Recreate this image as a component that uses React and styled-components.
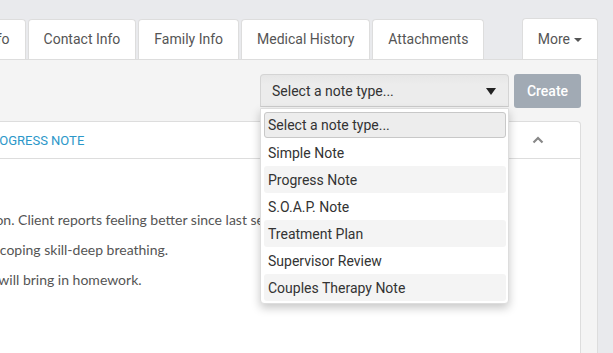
import styled, { createGlobalStyle } from 'styled-components'

const GlobalStyle = createGlobalStyle`
    html, body {
        margin: 0;
        padding: 0;
        background: #e9eaed;
        overflow: hidden;
        font-family: Roboto, "Liberation Sans", sans-serif;
    }
`

// the view is scrolled sideways: the left part of the page is off screen
const Page = styled.div`
    width: 668px;
    margin-left: -70px;
    padding-top: 18px;
    height: 353px;
    display: flex;
    flex-direction: column;
    box-sizing: border-box;
`

const TabBar = styled.ul`
    display: flex;
    align-items: flex-end;
    gap: 2px;
    margin: 0;
    padding: 0;
    list-style: none;
`

const Tab = styled.li`
    padding: ${p => (p.$push ? '10px 15px 10px 15px' : '9px 15px 10px')};
    line-height: 20px;
    font-size: 14px;
    color: #555;
    background: #fff;
    border: 1px solid #ddd;
    border-bottom: none;
    border-radius: 4px 4px 0 0;
    margin-left: ${p => (p.$push ? 'auto' : '0')};
    display: flex;
    align-items: center;
    gap: 4px;
`

const Caret = styled.span`
    width: 0;
    height: 0;
    border-left: 4px solid transparent;
    border-right: 4px solid transparent;
    border-top: 4px solid #555;
    margin-top: 1px;
`

const Panel = styled.div`
    flex: 1;
    background: #f4f4f4;
    border: 1px solid #ddd;
    border-bottom: none;
    padding: 14px 16px 0 16px;
    display: flex;
    flex-direction: column;
`

const Toolbar = styled.div`
    display: flex;
    justify-content: flex-end;
    gap: 5px;
`

const SelectWrap = styled.div`
    position: relative;
    width: 249px;
`

const SelectBox = styled.div`
    height: 33px;
    box-sizing: border-box;
    border: 1px solid #d4d4d4;
    border-bottom-color: #ccc;
    border-radius: 4px 4px 0 0;
    background: linear-gradient(#e6e6e6, #ececec 30%, #ececec);
    padding: 0 12px 0 11px;
    display: flex;
    align-items: center;
    justify-content: space-between;
    font-size: 14px;
    color: #333;
`

const SelectCaret = styled(Caret)`
    border-left-width: 5px;
    border-right-width: 5px;
    border-top: 7px solid #222;
`

const Menu = styled.ul`
    position: absolute;
    top: 34px;
    left: 0;
    right: 0;
    margin: 0;
    padding: 3px 2px 2px 3px;
    list-style: none;
    background: #fff;
    border: 1px solid #ddd;
    border-radius: 0 0 4px 4px;
    box-shadow: 0 4px 10px rgba(0, 0, 0, .22);
    z-index: 10;
`

const Option = styled.li`
    height: 27px;
    box-sizing: border-box;
    padding: 0 4px;
    display: flex;
    align-items: center;
    font-size: 14px;
    color: #333;
    background: ${p => (p.$alt ? '#f4f4f4' : '#fff')};
    border-radius: ${p => (p.$alt ? '3px' : '0')};

    &[aria-selected='true'] {
        height: 26px;
        margin-bottom: 1px;
        border: 1px solid #c8c8c8;
        border-radius: 3px;
        background: #ededed;
        padding: 0 3px;
    }
`

const CreateButton = styled.button`
    width: 67px;
    height: 34px;
    border: none;
    border-radius: 3px;
    background: #a1aab4;
    color: #fff;
    font-family: inherit;
    font-size: 14px;
    font-weight: 500;
    padding: 0;
`

const Card = styled.section`
    flex: 1;
    margin-top: 13px;
    background: #fff;
    border: 1px solid #ddd;
    border-bottom: none;
    border-radius: 4px 4px 0 0;
`

const CardHeader = styled.header`
    height: 36px;
    padding: 0 36px 0 15px;
    border-bottom: 1px solid #ddd;
    display: flex;
    align-items: center;
    justify-content: space-between;
`

const CardTitle = styled.h3`
    margin: 0;
    display: flex;
    align-items: center;
    gap: 6px;
    font-size: 13px;
    font-weight: 400;
    color: #2b97c9;
    text-transform: uppercase;
`

const CardBody = styled.div`
    padding: 51px 15px 0 17px;
    font-family: Lato, "Open Sans", sans-serif;
    font-size: 14px;
    color: #555;
`

const Line = styled.p`
    margin: 0 0 10px;
    line-height: 20px;
    white-space: nowrap;
`

const options = [
    'Select a note type...',
    'Simple Note',
    'Progress Note',
    'S.O.A.P. Note',
    'Treatment Plan',
    'Supervisor Review',
    'Couples Therapy Note',
]

const tabs = ['Client Info', 'Contact Info', 'Family Info', 'Medical History', 'Attachments']

export default function App() {
    return (
        <>
            <GlobalStyle />
            <Page>
                <TabBar>
                    {tabs.map(t => <Tab key={t}>{t}</Tab>)}
                    <Tab $push>More <Caret /></Tab>
                </TabBar>
                <Panel>
                    <Toolbar>
                        <SelectWrap>
                            <SelectBox>
                                <span>Select a note type...</span>
                                <SelectCaret />
                            </SelectBox>
                            <Menu>
                                {options.map((o, i) => (
                                    <Option key={o} aria-selected={i === 0} $alt={i > 0 && i % 2 === 0}>{o}</Option>
                                ))}
                            </Menu>
                        </SelectWrap>
                        <CreateButton>Create</CreateButton>
                    </Toolbar>
                    <Card>
                        <CardHeader>
                            <CardTitle>
                                <svg width="14" height="14" viewBox="0 0 14 14">
                                    <path d="M3 1h6l3 3v9H3z" fill="none" stroke="#2b97c9" strokeWidth="1.3" />
                                </svg>
                                Progress Note
                            </CardTitle>
                            <svg width="12" height="8" viewBox="0 0 12 8">
                                <path d="M1.5 6.5 L6 2 L10.5 6.5" fill="none" stroke="#888" strokeWidth="2.2" />
                            </svg>
                        </CardHeader>
                        <CardBody>
                            <Line>Session. Client reports feeling better since last session.</Line>
                            <Line>Used coping skill-deep breathing.</Line>
                            <Line>They will bring in homework.</Line>
                        </CardBody>
                    </Card>
                </Panel>
            </Page>
        </>
    )
}
